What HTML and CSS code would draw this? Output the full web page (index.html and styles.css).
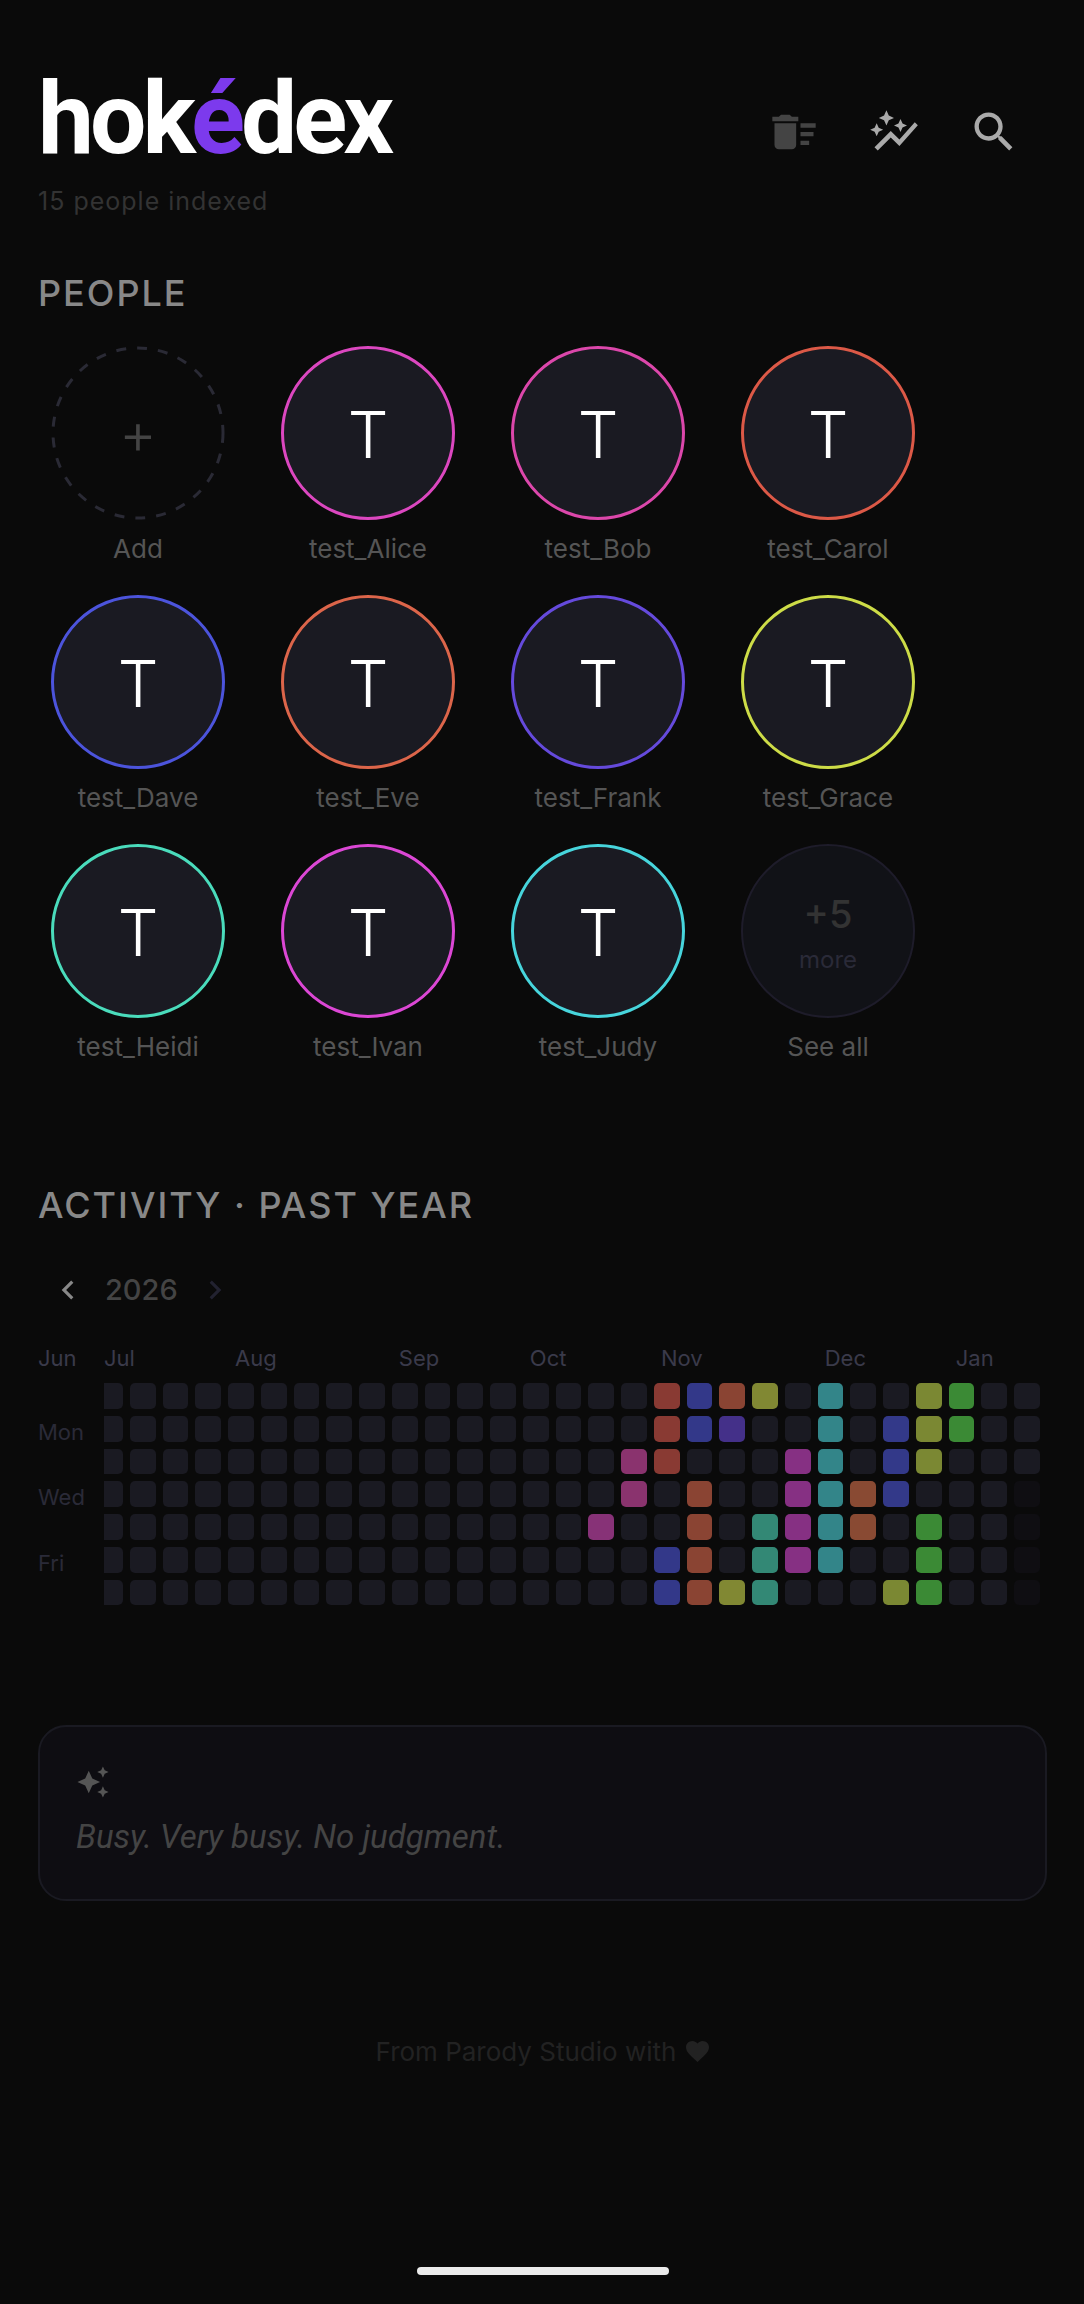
FILE: index.html
```html
<!DOCTYPE html>
<html lang="en">

<head>
    <meta charset="utf-8">
    <meta name="viewport" content="width=device-width, initial-scale=1">
    <title>hokédex</title>
    <link rel="stylesheet" href="styles.css">
</head>

<body>
    <header class="header">
        <div>
            <h1 class="logo">hok<span class="accent">é</span>dex</h1>
            <p class="count">15 people indexed</p>
        </div>
        <nav class="actions">
            <button class="icon-button dim" type="button" aria-label="Clear">
                <svg viewBox="0 0 24 24"><path d="M15 16h4v2h-4zm0-8h7v2h-7zm0 4h6v2h-6zM3 18c0 1.100.9 2 2 2h6c1.100 0 2-.9 2-2V8H3v10zM14 5h-3l-1-1H6L5 5H2v2h12z"/></svg>
            </button>
            <button class="icon-button" type="button" aria-label="Insights">
                <svg viewBox="0 0 24 24"><path d="M14.060 9.940L12 9l2.060-.94L15 6l.94 2.060L18 9l-2.060.94L15 12l-.94-2.060zM4 14l.94-2.060L7 11l-2.060-.94L4 8l-.94 2.060L1 11l2.060.94L4 14zm4.500-5l1.090-2.410L12 5.500 9.590 4.410 8.500 2 7.410 4.410 5 5.500l2.410 1.090L8.500 9zm-4 11.500l6-6.010 4 4L23 8.930l-1.410-1.410-7.090 7.970-4-4L3 19l1.500 1.500z"/></svg>
            </button>
            <button class="icon-button" type="button" aria-label="Search">
                <svg viewBox="0 0 24 24"><path d="M15.500 14h-.79l-.28-.27C15.410 12.590 16 11.110 16 9.500 16 5.910 13.090 3 9.500 3S3 5.910 3 9.500 5.910 16 9.500 16c1.610 0 3.090-.59 4.230-1.570l.27.28v.79l5 4.990L20.490 19l-4.990-5zm-6 0C7.010 14 5 11.990 5 9.500S7.010 5 9.500 5 14 7.010 14 9.500 11.990 14 9.500 14z"/></svg>
            </button>
        </nav>
    </header>

    <main>
        <section>
            <h2 class="title">PEOPLE</h2>
            <div class="people">
                <button class="person" type="button">
                    <span class="avatar add">
                        <svg class="dashes" viewBox="0 0 174 174"><circle cx="87" cy="87" r="85"/></svg>
                        +
                    </span>
                    Add
                </button>
                <a class="person" href="#alice"><span class="avatar pink">T</span>test_Alice</a>
                <a class="person" href="#bob"><span class="avatar rose">T</span>test_Bob</a>
                <a class="person" href="#carol"><span class="avatar red">T</span>test_Carol</a>
                <a class="person" href="#dave"><span class="avatar blue">T</span>test_Dave</a>
                <a class="person" href="#eve"><span class="avatar orange">T</span>test_Eve</a>
                <a class="person" href="#frank"><span class="avatar violet">T</span>test_Frank</a>
                <a class="person" href="#grace"><span class="avatar lime">T</span>test_Grace</a>
                <a class="person" href="#heidi"><span class="avatar mint">T</span>test_Heidi</a>
                <a class="person" href="#ivan"><span class="avatar magenta">T</span>test_Ivan</a>
                <a class="person" href="#judy"><span class="avatar cyan">T</span>test_Judy</a>
                <a class="person" href="#all">
                    <span class="avatar more"><b class="more-count">+5</b><span class="more-label">more</span></span>
                    See all
                </a>
            </div>
        </section>

        <section class="activity">
            <h2 class="title">ACTIVITY · PAST YEAR</h2>
            <div class="year">
                <button class="year-button" type="button" aria-label="Previous year">
                    <svg viewBox="0 0 24 24"><path d="M15.410 7.410L14 6l-6 6 6 6 1.410-1.410L10.830 12z"/></svg>
                </button>
                <span>2026</span>
                <button class="year-button" type="button" aria-label="Next year" disabled>
                    <svg viewBox="0 0 24 24"><path d="M10 6L8.590 7.410 13.170 12l-4.580 4.590L10 18l6-6z"/></svg>
                </button>
            </div>
            <div class="calendar">
                <span class="month">Jun</span>
                <div class="months" id="months"></div>
                <div class="days">
                    <span></span><span class="day">Mon</span>
                    <span></span><span class="day">Wed</span>
                    <span></span><span class="day">Fri</span>
                    <span></span>
                </div>
                <div class="weeks-clip">
                    <div class="weeks" id="weeks"></div>
                </div>
            </div>
        </section>

        <section class="note">
            <svg class="note-icon" viewBox="0 0 24 24"><path d="M19 9l1.250-2.750L23 5l-2.750-1.250L19 1l-1.250 2.750L15 5l2.750 1.250L19 9zm-7.500.5L9 4 6.500 9.500 1 12l5.500 2.500L9 20l2.500-5.500L17 12l-5.500-2.500zM19 15l-1.250 2.750L15 19l2.750 1.250L19 23l1.250-2.750L23 19l-2.750-1.250L19 15z"/></svg>
            <p class="note-text">Busy. Very busy. No judgment.</p>
        </section>
    </main>

    <footer class="footer">
        From Parody Studio with
        <svg class="heart" viewBox="2 3 20 19"><path d="M12 21.350l-1.450-1.320C5.400 15.360 2 12.280 2 8.500 2 5.420 4.420 3 7.500 3c1.740 0 3.410.81 4.500 2.090C13.090 3.810 14.760 3 16.500 3 19.580 3 22 5.420 22 8.500c0 3.780-3.400 6.860-8.550 11.540L12 21.350z"/></svg>
    </footer>
    <div class="home-bar"></div>

    <script src="script.js"></script>
</body>

</html>
```

FILE: styles.css
```css
* {
    box-sizing: border-box;
    margin: 0;
    padding: 0;
}

body {
    display: flex;
    flex-direction: column;
    min-height: 100vh;
    padding: 58px 37px 29px 38px;
    background-color: #0a0a0a;
    color: #555;
    font-family: Inter, "Liberation Sans", sans-serif;
    font-size: 26px;
}

button {
    border: 0;
    background: none;
    color: inherit;
    font: inherit;
}

a {
    color: inherit;
    text-decoration: none;
}

svg {
    display: block;
    fill: currentColor;
}

/* header */
.header {
    display: flex;
    justify-content: space-between;
}

.logo {
    color: #fff;
    font-family: Roboto, sans-serif;
    font-size: 100px;
    font-weight: 700;
    line-height: 122px;
    letter-spacing: -4px;
}

.accent {
    color: #7c3aed;
}

.count {
    padding-top: 5px;
    color: #333;
    font-size: 25px;
    line-height: 32px;
    letter-spacing: 1px;
}

.actions {
    display: flex;
    align-self: flex-start;
    gap: 4px;
    padding-top: 26px;
    padding-right: 5px;
}

.icon-button {
    width: 96px;
    height: 96px;
    padding: 22px;
    color: #aaa;
}

.dim {
    color: #444;
}

/* people */
.title {
    padding-top: 53px;
    color: #888;
    font-size: 36px;
    font-weight: 500;
    line-height: 46px;
    letter-spacing: 2px;
}

.people {
    display: grid;
    grid-template-columns: repeat(4, 200px);
    gap: 30px;
    padding-top: 30px;
}

.person {
    display: flex;
    flex-direction: column;
    align-items: center;
    gap: 13px;
    line-height: 32px;
}

.avatar {
    display: flex;
    align-items: center;
    justify-content: center;
    width: 174px;
    height: 174px;
    padding-top: 4px;
    border: 3px solid;
    border-radius: 50%;
    background-color: #1a1a22;
    font-size: 64px;
    font-weight: 300;
    line-height: 64px;
    -webkit-text-fill-color: #fff;
}

.pink { border-color: #dc47c0; }
.rose { border-color: #dc47ab; }
.red { border-color: #dc5947; }
.blue { border-color: #4c54dc; }
.orange { border-color: #dc654a; }
.violet { border-color: #654adc; }
.lime { border-color: #cddc47; }
.mint { border-color: #4adcbc; }
.magenta { border-color: #dc47d5; }
.cyan { border-color: #47d5dc; }

.add {
    position: relative;
    padding: 0;
    border: 0;
    background: none;
    font-size: 58px;
    -webkit-text-fill-color: #444;
}

.dashes {
    position: absolute;
    inset: 0;
    fill: none;
    stroke: #2a2a35;
    stroke-width: 3;
    stroke-dasharray: 10 11;
}

.more {
    flex-direction: column;
    gap: 6px;
    border: 2px solid #1e1c2a;
    background-color: #111217;
    -webkit-text-fill-color: #333;
}

.more-count {
    font-size: 38px;
    font-weight: 500;
    line-height: 48px;
}

.more-label {
    font-size: 24px;
    font-weight: 400;
    line-height: 32px;
    -webkit-text-fill-color: #2a2a38;
}

/* activity */
.activity {
    padding-top: 66px;
}

.year {
    display: flex;
    align-items: center;
    gap: 16px;
    padding: 41px 0 0 9px;
    color: #444;
    font-size: 29px;
    font-weight: 500;
    line-height: 42px;
}

.year-button {
    width: 42px;
    padding: 2px;
    color: #888;
}

.year-button:disabled {
    color: #222230;
}

.calendar {
    display: grid;
    grid-template-columns: 66px 1fr;
    row-gap: 11px;
    padding-top: 33px;
    font-size: 22px;
}

.month {
    color: #3a3a4a;
    line-height: 28px;
}

.months,
.weeks {
    display: grid;
    grid-template-columns: repeat(29, minmax(0, 1fr));
    column-gap: 7px;
}

.days {
    display: grid;
    grid-template-rows: repeat(7, minmax(0, 1fr));
    gap: 7px;
}

.day {
    padding-top: 8px;
    color: #2a2a38;
    line-height: 16px;
}

.weeks-clip {
    overflow: hidden;
}

/* the oldest week is cut off at the left edge */
.weeks {
    row-gap: 7px;
    margin: 0 7px 0 -7px;
}

.cell {
    aspect-ratio: 1;
    border-radius: 5px;
    background-color: #1a1a22;
}

.future {
    background-color: #0f0e12;
}

/* note */
.note {
    margin-top: 120px;
    padding: 36px 36px 40px;
    border: 2px solid #1a1a22;
    border-radius: 28px;
    background-color: #0e0d12;
}

.note-icon {
    width: 34px;
    margin-top: 2px;
    color: #555;
}

.note-text {
    padding-top: 16px;
    color: #444;
    font-family: Roboto, sans-serif;
    font-size: 33px;
    font-style: italic;
    line-height: 44px;
}

/* footer */
.footer {
    display: flex;
    align-items: center;
    justify-content: center;
    gap: 10px;
    margin-top: 135px;
    color: #222;
    line-height: 32px;
}

.heart {
    width: 23px;
}

.home-bar {
    width: 252px;
    height: 8px;
    margin: auto auto 0;
    border-radius: 4px;
    background-color: #ebebeb;
}
```

FILE: script.js
```js
const WEEKS = 29;

// column where each month starts
const months = { Jul: 0, Aug: 4, Sep: 9, Oct: 13, Nov: 17, Dec: 22, Jan: 26 };

// week: { day: color }
const activity = {
    15: { 4: "#873277" },
    16: { 2: "#8a336e", 3: "#8a336e" },
    17: { 0: "#893a33", 1: "#893a33", 2: "#893a33", 5: "#333889", 6: "#333889" },
    18: { 0: "#333889", 1: "#333889", 3: "#8a4433", 4: "#8a4433", 5: "#8a4433", 6: "#8a4433" },
    19: { 0: "#8a4433", 1: "#443089", 6: "#818833" },
    20: { 0: "#818833", 4: "#338875", 5: "#338875", 6: "#338875" },
    21: { 2: "#863083", 3: "#863083", 4: "#863083", 5: "#863083" },
    22: { 0: "#338589", 1: "#338589", 2: "#338589", 3: "#338589", 4: "#338589", 5: "#338589" },
    23: { 3: "#894a33", 4: "#894a33" },
    24: { 1: "#333989", 2: "#333989", 3: "#333989", 6: "#7b8833" },
    25: { 0: "#7b8833", 1: "#7b8833", 2: "#7b8833", 4: "#3b8a35", 5: "#3b8a35", 6: "#3b8a35" },
    26: { 0: "#3b8a35", 1: "#3b8a35" }
};

const monthRow = document.getElementById("months");
for (const name in months) {
    const label = document.createElement("span");
    label.className = "month";
    label.textContent = name;
    label.style.gridColumnStart = months[name] + 1;
    monthRow.appendChild(label);
}

const weeks = document.getElementById("weeks");
for (let day = 0; day < 7; day++) {
    for (let week = 0; week < WEEKS; week++) {
        const cell = document.createElement("div");
        cell.className = "cell";
        if (week === WEEKS - 1 && day > 2) {
            cell.classList.add("future");
        }
        if (activity[week] && activity[week][day]) {
            cell.style.backgroundColor = activity[week][day];
        }
        weeks.appendChild(cell);
    }
}
```
